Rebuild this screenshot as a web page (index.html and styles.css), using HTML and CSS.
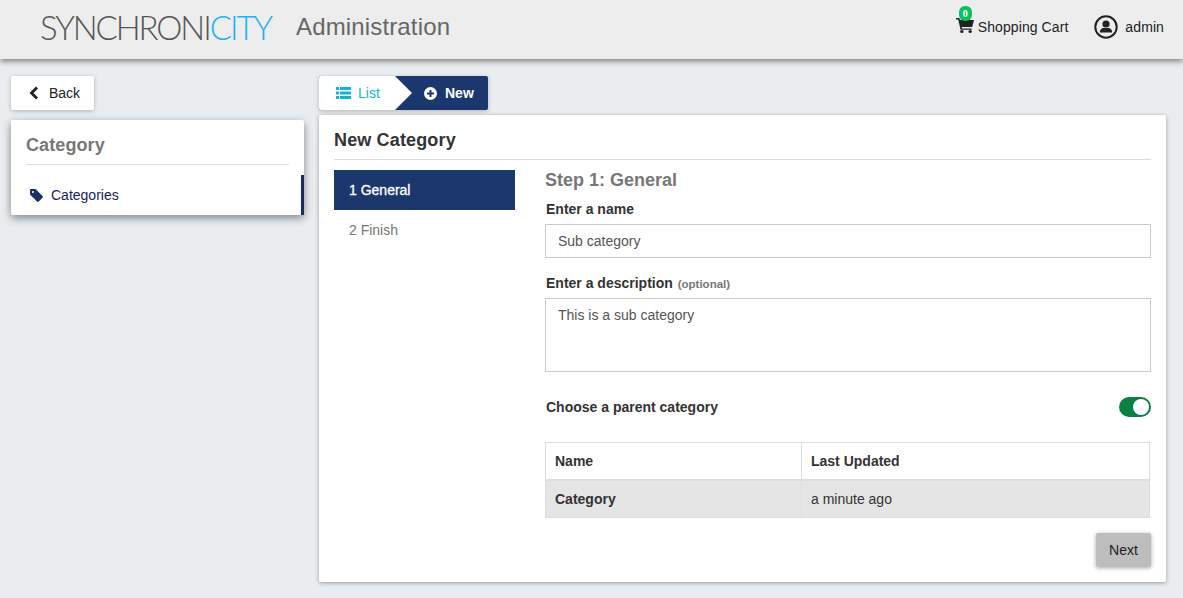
FILE: index.html
```html
<!DOCTYPE html>
<html lang="en">
<head>
    <meta charset="UTF-8">
    <meta name="viewport" content="width=device-width, initial-scale=1.0">
    <title>Synchronicity Administration</title>
    <link rel="stylesheet" href="styles.css">
</head>
<body>
    <header class="topbar">
        <div class="brand">
            <span class="logo">SYNCHRONI<span class="logo-accent">CITY</span></span>
            <span class="brand-title">Administration</span>
        </div>
        <nav class="topnav">
            <a class="cart">
                <span class="cart-icon">
                    <svg width="18" height="15" viewBox="0 0 16 15" preserveAspectRatio="none"><path fill="#222" d="M0 0h3l.5 2H16l-1.600 7H5l.3 1.400H14v1.400H4L2 1.400H0z"/><circle fill="#222" cx="5.200" cy="13.500" r="1.500"/><circle fill="#222" cx="12.600" cy="13.500" r="1.500"/></svg>
                    <span class="badge">0</span>
                </span>
                Shopping Cart
            </a>
            <a class="user">
                <svg width="24" height="24" viewBox="0 0 24 24"><circle cx="12" cy="12" r="10.700" fill="none" stroke="#222" stroke-width="2"/><circle cx="12" cy="9" r="3.600" fill="#222"/><path fill="#222" d="M5.800 17.500c0-3 2-4.600 3.600-4.600h5.200c1.600 0 3.600 1.600 3.600 4.600z"/></svg>
                admin
            </a>
        </nav>
    </header>

    <div class="page">
        <aside class="side">
            <a class="back-btn">
                <svg width="10" height="14" viewBox="0 0 10 14"><path fill="none" stroke="#222" stroke-width="2.800" d="M8 1.500 2.500 7 8 12.500"/></svg>
                Back
            </a>
            <div class="side-card">
                <h2>Category</h2>
                <div class="side-item">
                    <svg width="13" height="13" viewBox="0 0 13 13"><path fill="#1c2f63" d="M0 1.200C0 .5.500 0 1.200 0h4.300l7 7c.5.500.5 1.200 0 1.700l-3.800 3.800c-.5.500-1.200.500-1.700 0l-7-7zM3 2a1 1 0 1 0 0 2 1 1 0 0 0 0-2z"/></svg>
                    Categories
                </div>
            </div>
        </aside>

        <main class="content">
            <div class="tabs">
                <a class="tab tab-list">
                    <svg width="15" height="12" viewBox="0 0 15 12"><path fill="#12b5cb" d="M0 0h3v3H0zM4 0h11v3H4zM0 4.500h3v3H0zM4 4.500h11v3H4zM0 9h3v3H0zM4 9h11v3H4z"/></svg>
                    List
                </a>
                <a class="tab tab-new">
                    <svg width="13" height="13" viewBox="0 0 13 13"><path fill="#fff" fill-rule="evenodd" d="M6.500 0a6.500 6.500 0 1 1 0 13 6.500 6.500 0 0 1 0-13zM5.500 3v2.500H3v2h2.500V10h2V7.500H10v-2H7.500V3z"/></svg>
                    New
                </a>
            </div>

            <section class="card">
                <h1>New Category</h1>
                <div class="wizard">
                    <ul class="steps">
                        <li class="step active">1 General</li>
                        <li class="step">2 Finish</li>
                    </ul>
                    <form class="step-form">
                        <h3>Step 1: General</h3>
                        <label for="name">Enter a name</label>
                        <input type="text" id="name" value="Sub category">
                        <label for="description" class="label-desc">Enter a description <small>(optional)</small></label>
                        <textarea id="description">This is a sub category</textarea>
                        <div class="parent-row">
                            <span class="parent-label">Choose a parent category</span>
                            <span class="toggle"><span class="knob"></span></span>
                        </div>
                        <table class="parents">
                            <thead>
                                <tr><th class="col-name">Name</th><th>Last Updated</th></tr>
                            </thead>
                            <tbody>
                                <tr><td class="cell-name">Category</td><td>a minute ago</td></tr>
                            </tbody>
                        </table>
                        <div class="actions">
                            <button type="button" class="next-btn">Next</button>
                        </div>
                    </form>
                </div>
            </section>
        </main>
    </div>
</body>
</html>
```

FILE: styles.css
```css
* {
    box-sizing: border-box;
}
html, body {
    height: 100%;
}
body {
    margin: 0;
    background-color: #e9edf0;
    font-family: "Liberation Sans", Arial, sans-serif;
    font-size: 14px;
    color: #333;
    overflow: hidden;
}
.topbar {
    height: 59px;
    background-color: #ededed;
    box-shadow: 0 2px 6px rgba(0, 0, 0, 0.5);
    display: flex;
    justify-content: space-between;
    align-items: center;
    padding: 0 19px 5px 40px;
}
.brand {
    display: flex;
    align-items: center;
    gap: 23px;
}
.logo {
    width: 233px;
    padding-bottom: 1px;
    font-family: Lato, sans-serif;
    font-weight: 300;
    font-size: 33px;
    letter-spacing: -2.1px;
    white-space: nowrap;
    color: #555;
    line-height: 36px;
}
.logo-accent {
    color: #1fb1f5;
}
.brand-title {
    font-size: 24px;
    letter-spacing: 0.15px;
    color: #666;
}
.topnav {
    display: flex;
    align-items: center;
    gap: 26px;
    color: #222;
}
.cart, .user {
    display: flex;
    align-items: center;
}
.cart {
    gap: 4px;
    letter-spacing: 0.08px;
}
.user {
    gap: 7px;
    letter-spacing: 0.1px;
}
.cart-icon {
    position: relative;
    display: flex;
    margin-bottom: 3px;
}
.badge {
    position: absolute;
    top: -12px;
    left: 3px;
    width: 13px;
    height: 15px;
    border-radius: 6px;
    background-color: #0cc15d;
    color: #fff;
    font-family: "Liberation Serif", serif;
    font-size: 10px;
    font-weight: bold;
    line-height: 15px;
    text-align: center;
}
.page {
    display: flex;
    padding: 17px 17px 0 11px;
    gap: 15px;
}
.side {
    width: 293px;
    flex-shrink: 0;
}
.back-btn {
    display: inline-flex;
    align-items: center;
    gap: 10px;
    height: 34px;
    width: 83px;
    padding-left: 18px;
    background-color: #fff;
    border-radius: 2px;
    color: #222;
    box-shadow: 0 1px 4px rgba(0, 0, 0, 0.25);
}
.side-card {
    margin-top: 10px;
    height: 95px;
    padding: 15px 15px 0;
    background-color: #fff;
    border-radius: 2px;
    box-shadow: 0 3px 9px rgba(0, 0, 0, 0.45);
    position: relative;
}
.side-card h2 {
    margin: 0;
    padding-bottom: 9px;
    font-size: 18px;
    letter-spacing: 0.1px;
    line-height: 20px;
    color: #777;
    border-bottom: 1px solid #ddd;
}
.side-item {
    display: flex;
    align-items: center;
    gap: 8px;
    margin-top: 20px;
    padding-left: 4px;
    line-height: 20px;
    color: #15235a;
}
.side-item::after {
    content: "";
    position: absolute;
    right: 0;
    top: 55px;
    bottom: 0;
    width: 3px;
    background-color: #15296b;
}
.content {
    flex: 1;
    min-width: 0;
}
.tabs {
    display: flex;
    height: 34px;
    width: 169px;
    border-radius: 2px;
    box-shadow: 0 1px 4px rgba(0, 0, 0, 0.25);
    background-color: #1c376e;
    overflow: hidden;
}
.tab {
    display: flex;
    align-items: center;
    gap: 7px;
}
.tab-list {
    width: 76px;
    padding-left: 17px;
    background-color: #fff;
    color: #12b5cb;
    position: relative;
}
/* arrow of the white tab, cuts into the dark one */
.tab-list::after {
    content: "";
    position: absolute;
    left: 100%;
    top: 0;
    border-left: 17px solid #fff;
    border-top: 17px solid transparent;
    border-bottom: 17px solid transparent;
}
.tab-new {
    flex: 1;
    gap: 8px;
    padding-left: 29px;
    color: #fff;
    font-weight: bold;
}
.card {
    margin-top: 5px;
    height: 467px;
    padding: 14px 15px 0;
    background-color: #fff;
    border-radius: 2px;
    box-shadow: 0 1px 4px rgba(0, 0, 0, 0.35);
}
.card h1 {
    margin: 0;
    padding-bottom: 7px;
    font-size: 18px;
    letter-spacing: 0.15px;
    line-height: 23px;
    color: #333;
    border-bottom: 1px solid #ddd;
}
.wizard {
    display: flex;
    gap: 30px;
    margin-top: 10px;
}
.steps {
    width: 181px;
    flex-shrink: 0;
    margin: 0;
    padding: 0;
    list-style: none;
}
.step {
    height: 40px;
    line-height: 40px;
    padding-left: 15px;
    color: #777;
}
.step.active {
    background-color: #1c376e;
    color: #fff;
    -webkit-text-stroke: 0.3px #fff;
}
.step-form {
    flex: 1;
    min-width: 0;
}
.step-form h3 {
    margin: 0;
    font-size: 18px;
    line-height: 20px;
    color: #777;
}
.step-form label {
    display: block;
    margin-top: 9px;
    padding-left: 1px;
    font-weight: bold;
    line-height: 20px;
    color: #333;
}
.step-form .label-desc {
    margin-top: 15px;
}
.step-form small {
    margin-left: 1px;
    font-size: 11.5px;
    color: #777;
}
.step-form input, .step-form textarea {
    display: block;
    width: 100%;
    margin-top: 5px;
    padding: 0 12px;
    border: 1px solid #ccc;
    font-family: inherit;
    font-size: 14px;
    color: #555;
    outline: none;
}
.step-form input {
    height: 34px;
}
.step-form .label-desc + textarea {
    margin-top: 4px;
}
.step-form textarea {
    height: 74px;
    padding-top: 8px;
    resize: none;
}
.parent-row {
    display: flex;
    justify-content: space-between;
    align-items: center;
    margin-top: 25px;
    height: 20px;
}
.parent-label {
    padding-left: 1px;
    font-weight: bold;
}
.toggle {
    display: block;
    width: 32px;
    height: 20px;
    padding: 2px;
    border-radius: 10px;
    background-color: #0b8043;
}
.knob {
    display: block;
    width: 16px;
    height: 16px;
    margin-left: 12px;
    border-radius: 50%;
    background-color: #fff;
}
.parents {
    width: 605px;
    margin: 25px 0 0;
    border-collapse: collapse;
}
.parents th, .parents td {
    height: 38px;
    padding: 0 9px;
    text-align: left;
    border: 1px solid #ddd;
}
.parents th {
    height: 37px;
    border-bottom-width: 2px;
}
.col-name {
    width: 256px;
}
.parents td {
    background-color: #e5e5e5;
}
.parents .cell-name {
    font-weight: bold;
}
.actions {
    display: flex;
    justify-content: flex-end;
    margin-top: 15px;
}
.next-btn {
    width: 55px;
    height: 34px;
    border: none;
    border-radius: 2px;
    background-color: #bdbdbd;
    color: #222;
    font-family: inherit;
    font-size: 14px;
    box-shadow: 0 1px 4px rgba(0, 0, 0, 0.35);
}
```
